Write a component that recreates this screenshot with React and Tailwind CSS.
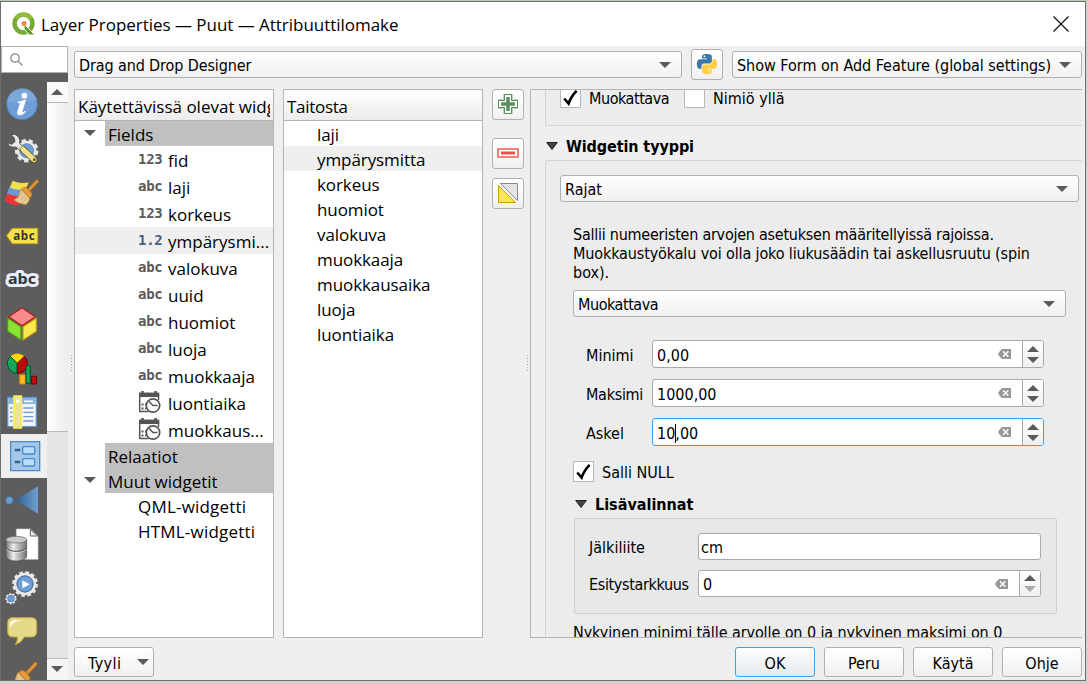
const button = "border border-[#b0b0b0] rounded-[3px] bg-gradient-to-b from-white to-[#f0f0f0]";
const input = "flex items-center border border-[#a9a9a9] rounded-[3px] bg-white";

function Arrow({ up = false, className = "text-[#5a5a5a]" }) {
  return (
    <svg className={"shrink-0 " + className} width="12" height="6" viewBox="0 0 12 6" fill="currentColor">
      <path d={up ? "M0 6 6 0l6 6z" : "M0 0h12L6 6z"} />
    </svg>
  );
}

function Combo({ label, className, textClass = "pt-[2px]" }) {
  return (
    <div className={`flex items-center justify-between pl-1 pr-[10px] ${button} ${className}`}>
      <span className={"whitespace-nowrap " + textClass}>{label}</span>
      <Arrow />
    </div>
  );
}

function Check({ checked = false }) {
  return (
    <span className="flex h-[21px] w-[21px] shrink-0 items-center justify-center border border-[#b9b9b9] bg-white">
      {checked && (
        <svg width="17" height="17" viewBox="0 0 17 17" fill="none" stroke="#000" strokeWidth="2.6">
          <path d="M2.2 9.5 6.6 14.6 Q9 7.5 14.6 1.8" />
        </svg>
      )}
    </span>
  );
}

function ClearIcon() {
  return (
    <svg width="13" height="10" viewBox="0 0 13 10">
      <path d="M4 0h9v10H4Q1.5 8 0 5 1.500 2 4 0z" fill="#979797" />
      <path d="m5 2.200 5.400 5.600M10.400 2.200 5 7.800" stroke="#fff" strokeWidth="1.400" />
    </svg>
  );
}

function Spin({ children, className, focused = false, atMin = false }) {
  return (
    <div className={`flex border rounded-[3px] bg-white ${focused ? "border-[#3fa0ee]" : "border-[#a9a9a9]"} ${className}`}>
      <div className="flex flex-1 items-center justify-between pl-1 pr-[11px]">
        <span className="flex items-center pt-[3px]">{children}</span>
        <ClearIcon />
      </div>
      <div className="flex w-[21px] flex-col items-center justify-center gap-[5px] rounded-r-[2px] border-l border-[#a9a9a9] bg-gradient-to-b from-white to-[#f0f0f0]">
        <Arrow up />
        <Arrow className={atMin ? "text-[#a9a9a9]" : "text-[#5a5a5a]"} />
      </div>
    </div>
  );
}

function Gear({ cx, cy, r, w, n, fill = "#e8e8e8", edge = "#777" }) {
  const c = Math.PI * 2 * r;
  const dash = `${(c / n) * 0.58} ${(c / n) * 0.42}`;
  return (
    <g fill="none">
      <circle cx={cx} cy={cy} r={r} stroke={edge} strokeWidth={w + 3} strokeDasharray={dash} />
      <circle cx={cx} cy={cy} r={r} stroke={fill} strokeWidth={w} strokeDasharray={dash} />
      <circle cx={cx} cy={cy} r={r - w / 2} stroke={fill} strokeWidth={w * 0.9} />
    </g>
  );
}

function Brush() {
  return (
    <g>
      <path d="M108 34 82 62" stroke="#a5671c" strokeWidth="11" strokeLinecap="round" />
      <path d="M108 34 82 62" stroke="#e0973a" strokeWidth="7" strokeLinecap="round" />
      <path d="m62 57 8-5q6-1 10 4l12 13q3 6-1 10l-6 6z" fill="#e39b3c" stroke="#a5671c" strokeWidth="2" />
      <path d="m60 57 26 28q-2 14-12 19-20-2-36-14l12-8q5-13 10-25z" fill="#eccb94" stroke="#b57a34" strokeWidth="2" />
      <path d="m50 87 14-19M58 92l13-16M66 97l12-14" stroke="#b98f55" strokeWidth="2" />
    </g>
  );
}

const sidebarIcons = [
  <g>
    <circle cx="63" cy="67" r="46" fill="#6f9ed6" stroke="#5080b8" strokeWidth="3" />
    <path d="M18 62a45 45 0 0 1 89-8q-40 2-89 8z" fill="#86aedd" opacity=".6" />
    <circle cx="70" cy="41" r="8.500" fill="#fff" />
    <path d="M49 59q14-1 23-6l3 1-11 36q-1 4 8-4l3 3q-12 12-21 11-8-2-5-12l7-22q1-4-7-4z" fill="#fff" />
  </g>,
  <g>
    <Gear cx={77} cy={74} r={30} w={10} n={9} />
    <circle cx="77" cy="74" r="21" fill="#6f9ed6" stroke="#5080b8" strokeWidth="2" />
    <path d="M30 26q15-4 23 8 5 9 3 18l10 11-10 10-11-10q-18 4-27-13l15 5 9-9q1-12-12-20z" fill="#e9e9e9" stroke="#484848" strokeWidth="2.500" />
    <path d="m67 71 32 30" stroke="#5f5726" strokeWidth="20" strokeLinecap="round" />
    <path d="m66 70 33 31" stroke="#efe18b" strokeWidth="15" strokeLinecap="round" />
    <path d="m55 69 12-10" stroke="#c8b75b" strokeWidth="4" />
    <circle cx="100" cy="101" r="4" fill="#514b28" />
  </g>,
  <g>
    <path d="M35 32q22 10 48 5l-14 32Q42 70 24 58z" fill="#f4e04d" />
    <path d="M25 52q20 10 45 7l-8 22Q36 82 17 71z" fill="#6a9bd8" />
    <path d="M18 70q18 10 38 8l-2 27Q30 107 12 92z" fill="#ee3338" />
    <Brush />
  </g>,
  <g>
    <path d="M17 65 34 43h76v46H34z" fill="#f7e04e" stroke="#c8a51a" strokeWidth="3" strokeLinejoin="round" />
    <text x="37" y="77" fontSize="35" fontWeight="bold" fill="#333" textLength="64" className="font-['Noto_Sans',sans-serif]">abc</text>
  </g>,
  <g>
    <text x="21" y="77" fontSize="45" fontWeight="bold" fill="#31363b" stroke="#e9eefc" strokeWidth="18" strokeLinejoin="round" paintOrder="stroke" textLength="84" lengthAdjust="spacingAndGlyphs" className="font-['Noto_Sans',sans-serif]">abc</text>
  </g>,
  <g strokeWidth="3.500" strokeLinejoin="round">
    <path d="M63 17 103 44 63 71 23 44z" fill="#f78b8b" stroke="#b5161b" />
    <path d="M20 48 60 74v40L20 88z" fill="#8ae234" stroke="#55961a" />
    <path d="M106 48 66 74v40l40-26z" fill="#fce94f" stroke="#c4a000" />
  </g>,
  <g strokeLinejoin="round">
    <path d="M49 52 28 31a30 30 0 0 1 42 0z" fill="#ffd800" stroke="#b38600" strokeWidth="2" />
    <path d="M49 52 28 31a30 30 0 0 0 21 51z" fill="#12a75a" stroke="#064d29" strokeWidth="3" />
    <path d="M49 52 70 31a30 30 0 0 1-21 51z" fill="#bd0b0b" stroke="#5f0505" strokeWidth="3" />
    <path d="M56 86h17v28H56z" fill="#fdbc23" stroke="#c98500" strokeWidth="3" />
    <path d="M91 91h16v23H91z" fill="#bd0b0b" stroke="#6e0505" strokeWidth="3" />
    <path d="M75 59h13v53H75z" fill="#12a75a" stroke="#064d29" strokeWidth="3" />
  </g>,
  <g>
    <path d="M20 22h86v88H20z" fill="#f2f4f6" stroke="#5e93cb" strokeWidth="4" />
    <path d="M22 24h82v18H22z" fill="#86b5e3" />
    <path d="M69 34h26" stroke="#fff" strokeWidth="5" />
    <path d="M27 54h8M67 54h30M27 67h8M67 67h30M27 80h8M67 80h30M27 93h8M67 93h30" stroke="#6e9dce" strokeWidth="4" />
    <path d="M39 18h22v96H39z" fill="#ede0a5" stroke="#f8ef4f" strokeWidth="5" />
    <path d="M45 29h10v10H45z" fill="#fff" />
  </g>,
  <g>
    <path d="M29 23h87v87H29z" fill="#a3c7ea" stroke="#4c8ac8" strokeWidth="4" />
    <g fill="#b8dcfb" stroke="#4c8ac8" strokeWidth="4">
      <rect x="65" y="38" width="36" height="22" rx="3" />
      <rect x="65" y="74" width="36" height="22" rx="3" />
    </g>
    <path d="M41 48h17M41 84h17" stroke="#35648f" strokeWidth="8" />
  </g>,
  <g>
    <defs>
      <linearGradient id="cone"><stop stopColor="#2f6095" /><stop offset="1" stopColor="#6f9fd0" /></linearGradient>
    </defs>
    <circle cx="25" cy="67" r="11" fill="#6b9ccf" stroke="#4379ad" strokeWidth="2" />
    <path d="M44 66 111 25v82z" fill="url(#cone)" />
  </g>,
  <g>
    <defs>
      <linearGradient id="metal"><stop stopColor="#777" /><stop offset=".35" stopColor="#ececec" /><stop offset="1" stopColor="#707070" /></linearGradient>
    </defs>
    <path d="M46 21h42l23 21v70H46z" fill="#fff" stroke="#c8c8c8" strokeWidth="2" />
    <path d="M88 22v20h22z" fill="#e9e9e9" stroke="#666" strokeWidth="3" />
    <path d="M15 53v52q8 12 31 12t31-12V53z" fill="url(#metal)" stroke="#505050" strokeWidth="2" />
    <ellipse cx="46" cy="53" rx="31" ry="10" fill="#c9c9c9" stroke="#666" strokeWidth="2" />
    <path d="M15 80q8 11 31 11t31-11" fill="none" stroke="#eee" strokeWidth="2" />
    <path d="M15 77q8 11 31 11t31-11" fill="none" stroke="#505050" strokeWidth="3" />
  </g>,
  <g>
    <Gear cx={72} cy={54} r={34} w={9} n={12} />
    <circle cx="72" cy="54" r="24" fill="#6f9ed6" stroke="#4778af" strokeWidth="3" />
    <path d="m64 43 22 12-22 12z" fill="#fff" />
    <Gear cx={30} cy={98} r={14} w={5} n={9} />
    <circle cx="30" cy="98" r="10" fill="#6f9ed6" stroke="#4778af" strokeWidth="2" />
  </g>,
  <g>
    <path d="M36 23h54q17 0 17 15v27q0 16-17 16H70Q62 98 43 104q8-11 6-23H36q-16 0-16-16V38q0-15 16-15z" fill="#e5da87" stroke="#c1a940" strokeWidth="3" />
    <path d="M27 55V41q1-10 17-11h22q-32 2-39 25z" fill="#fffbe8" />
  </g>,
  <g transform="translate(-15 -8) scale(1.1)"><Brush /></g>,
];

function Sidebar() {
  return (
    <aside className="flex w-[67px] shrink-0 flex-col bg-[#5d5d5d]">
      <div className="h-[27px] shrink-0 border border-[#b0b0b0] bg-white pl-[8px] pt-[6px]">
        <svg width="13" height="13" viewBox="0 0 13 13" fill="none" stroke="#8a8a8a" strokeWidth="1.300">
          <circle cx="5" cy="5" r="4.200" /><path d="m8 8 4.500 4.500" />
        </svg>
      </div>
      <div className="flex min-h-0 flex-1">
        <div className="w-[46px] overflow-hidden pt-[9px]">
          {sidebarIcons.map((icon, i) => (
            <div key={i} className={i === 8 ? "h-[44px] bg-[#efefef]" : "h-[44px]"}>
              <svg width="46" height="44" viewBox="0 0 138 132">{icon}</svg>
            </div>
          ))}
        </div>
        <div className="mt-[9px] flex w-[21px] flex-col bg-[#e6e6e6]">
          <div className="flex h-[21px] items-center justify-center border-b border-[#b8b8b8] bg-[#f9f9f9] pb-[1px] pr-[1px]"><Arrow up /></div>
          <div className="h-[329px] border-b border-[#b8b8b8] bg-gradient-to-r from-white to-[#ececec]" />
          <div className="flex-1" />
          <div className="flex h-[22px] items-center justify-center border-t border-[#b8b8b8] bg-[#f5f5f5] pb-[2px] pr-[1px]"><Arrow /></div>
        </div>
      </div>
    </aside>
  );
}

function DateIcon() {
  return (
    <svg width="23" height="23" viewBox="0 0 23 23" fill="none" stroke="#555" strokeWidth="1.500">
      <path d="M1.700 3v17.500h9M20.500 3v6" />
      <path d="M1 3.800h20.200" strokeWidth="4.500" />
      <path d="M4.500 0v3M17.500 0v3" strokeWidth="2.500" />
      <circle cx="15" cy="14.500" r="6.700" fill="#fff" strokeWidth="1.700" />
      <path d="m11 10.500 4 4h4.500" />
      <path d="M3.500 13.500h2M3.500 17.500h2M7 17.500h1.500M7 13.500h1" strokeWidth="2" />
    </svg>
  );
}

const fields = [
  ["123", "fid"], ["abc", "laji"], ["123", "korkeus"], ["1.2", "ympärysmi..."], ["abc", "valokuva"],
  ["abc", "uuid"], ["abc", "huomiot"], ["abc", "luoja"], ["abc", "muokkaaja"], ["date", "luontiaika"], ["date", "muokkaus..."],
];

function GroupRow({ label, arrow = true }) {
  return (
    <div className="flex h-[25px]">
      <div className="flex w-[30px] items-center pb-[1px] pl-[9px]">{arrow && <Arrow />}</div>
      <div className="flex flex-1 items-center bg-[#c0c0c0] pl-[3px] pt-[3px]">{label}</div>
    </div>
  );
}

const panel = "flex flex-col border border-[#b4b4b4] bg-white font-['Open_Sans',sans-serif] text-[17px] leading-[24px]";
const header = "flex h-[31px] shrink-0 items-center overflow-hidden whitespace-nowrap border-b border-[#b4b4b4] bg-gradient-to-b from-white to-[#ececec] pl-[3px] pt-[3px]";

function FieldTree() {
  return (
    <div className={`w-[200px] ${panel}`}>
      <div className={header}><span className="w-[192px] overflow-hidden">Käytettävissä olevat widgetit</span></div>
      <GroupRow label="Fields" />
      {fields.map(([type, name], i) => (
        <div key={name} className={`flex h-[27px] items-center pl-[63px] ${i === 3 ? "bg-[#efefef]" : ""}`}>
          <div className="flex w-[30px] items-center">
            {type === "date" ? <DateIcon /> : (
              <span className={`pb-[2px] font-['DejaVu_Sans_Mono',monospace] text-[14px] font-bold leading-none tracking-[-0.300px] ${type === "1.2" ? "text-[#42607e]" : "text-[#5a5a5a]"}`}>{type}</span>
            )}
          </div>
          <span className="whitespace-nowrap pt-[2px]">{name}</span>
        </div>
      ))}
      <GroupRow label="Relaatiot" arrow={false} />
      <GroupRow label="Muut widgetit" />
      {["QML-widgetti", "HTML-widgetti"].map((t) => <div key={t} className="flex h-[25px] items-center pl-[63px] pt-[3px] tracking-[0.200px]">{t}</div>)}
    </div>
  );
}

const layoutItems = ["laji", "ympärysmitta", "korkeus", "huomiot", "valokuva", "muokkaaja", "muokkausaika", "luoja", "luontiaika"];

function LayoutTree() {
  return (
    <div className={`ml-[9px] w-[200px] ${panel}`}>
      <div className={header}><span className="tracking-[-0.300px]">Taitosta</span></div>
      {layoutItems.map((t, i) => <div key={t} className={`flex h-[25px] items-center pl-[33px] pt-[3px] tracking-[-0.080px] ${i === 1 ? "bg-[#efefef]" : ""}`}>{t}</div>)}
    </div>
  );
}

function ToolButton({ children, className = "" }) {
  return <div className={`flex h-[31px] w-[32px] shrink-0 items-center justify-center pb-[1px] ${button} ${className}`}>{children}</div>;
}

function Tools() {
  return (
    <div className="ml-[9px] w-[32px]">
      <ToolButton>
        <svg width="22" height="22" viewBox="0 0 22 22" fill="#fff" stroke="#5a8f5d">
          <path d="M6.500 1h9v5.500H21v9h-5.500V21h-9v-5.500H1v-9h5.500z" fill="#8ab28b" stroke="none" />
          <path d="M7.500 1.500h7v6h6v7h-6v6h-7v-6h-6v-7h6z" />
          <path d="M11 4v14M4 11h14" strokeWidth="3.500" />
        </svg>
      </ToolButton>
      <ToolButton className="mt-[18px]">
        <svg width="22" height="10" viewBox="0 0 22 10">
          <path d="M1 1h20v8H1z" fill="#fff" stroke="#ee5a5a" strokeWidth="1.500" /><path d="M4 5h14" stroke="#ef4b4b" strokeWidth="3" />
        </svg>
      </ToolButton>
      <ToolButton className="mt-[9px]">
        <svg width="20" height="20" viewBox="0 0 20 20">
          <path d="M2.500.5h17v17z" fill="#e4e4e6" stroke="#88888c" /><path d="M.5 2.500v17h17z" fill="#fde74e" stroke="#c4a000" />
        </svg>
      </ToolButton>
    </div>
  );
}

function SectionTitle({ children, className }) {
  return (
    <div className={`flex items-center gap-[8px] font-bold ${className}`}>
      <svg width="12" height="8" viewBox="0 0 12 8"><path d="M.7.500h10.600L6 7.500z" fill="#444" stroke="#222" /></svg>
      <span className="pt-[1px]">{children}</span>
    </div>
  );
}

function Properties() {
  return (
    <div className="ml-[6px] flex w-[552px] flex-col overflow-hidden border-y border-l border-[#b4b4b4] pl-[14px]">
      <div className="flex h-[36px] shrink-0 rounded-bl-[2px] border-b border-l border-[#d4d4d4] bg-[#ececec] pl-[14px]">
        <div className="-mt-[3px] flex h-[21px] items-center">
          <Check checked /><span className="ml-[8px] w-[95px] pt-[2px] tracking-[-0.450px]">Muokattava</span>
          <Check /><span className="ml-[8px] pt-[2px]">Nimiö yllä</span>
        </div>
      </div>
      <SectionTitle className="h-[34px] shrink-0 pt-[6px] pl-[1px] tracking-[-0.100px]">Widgetin tyyppi</SectionTitle>
      <div className="flex h-[520px] shrink-0 flex-col rounded-tl-[2px] border-l border-t border-[#d4d4d4] bg-[#ececec] pl-[14px] pt-[14px]">
        <Combo label="Rajat" className="h-[27px] w-[519px] shrink-0" />
        <div className="ml-[13px] flex w-[493px] flex-col">
          <p className="mt-[23px] whitespace-nowrap leading-[19px]">
            <span className="block tracking-[-0.250px]">Sallii numeeristen arvojen asetuksen määritellyissä rajoissa.</span>
            <span className="block tracking-[-0.130px]">Muokkaustyökalu voi olla joko liukusäädin tai askellusruutu (spin</span>
            <span className="block">box).</span>
          </p>
          <Combo label="Muokattava" className="mt-[8px] h-[27px] shrink-0" textClass="tracking-[-0.450px] pt-[2px]" />
          <div className="mt-[23px] flex flex-col gap-[11px] pl-[13px]">
            <div className="flex items-center"><span className="w-[66px] pt-[3px]">Minimi</span><Spin className="h-[28px] w-[392px]">0,00</Spin></div>
            <div className="flex items-center"><span className="w-[66px] pt-[3px] tracking-[-0.300px]">Maksimi</span><Spin className="h-[28px] w-[392px]">1000,00</Spin></div>
            <div className="flex items-center"><span className="w-[66px] pt-[3px]">Askel</span><Spin focused className="h-[28px] w-[392px]">10<i className="-mr-[1px] h-[19px] w-[1px] bg-black" />,00</Spin></div>
          </div>
          <div className="mt-[15px] flex h-[21px] items-center gap-[8px]"><Check checked /><span className="pt-[2px]">Salli NULL</span></div>
          <SectionTitle className="mt-[12px] h-[20px] pl-[2px]">Lisävalinnat</SectionTitle>
          <div className="ml-[1px] mt-[4px] flex h-[96px] w-[483px] flex-col gap-[10px] rounded-[2px] border border-[#d0d0d0] bg-[#e8e8e8] pl-[14px] pt-[14px]">
            <div className="flex items-center"><span className="w-[109px] pt-[2px]">Jälkiliite</span><div className={`h-[27px] w-[343px] pl-[2px] pt-[2px] ${input}`}>cm</div></div>
            <div className="flex items-center"><span className="w-[109px] pt-[2px] tracking-[-0.350px]">Esitystarkkuus</span><Spin atMin className="h-[27px] w-[343px]">0</Spin></div>
          </div>
          <div className="mt-[9px] whitespace-nowrap tracking-[-0.090px]">Nykyinen minimi tälle arvolle on 0 ja nykyinen maksimi on 0</div>
        </div>
      </div>
    </div>
  );
}

function PythonLogo() {
  return (
    <svg width="22" height="22" viewBox="0 0 24 24">
      <path d="M11.900 1C6.300 1 6.700 3.400 6.700 3.400v2.500h5.300v.8H4.500S1 6.300 1 11.900s3.100 5.300 3.100 5.300h1.900v-2.600s-.1-3.100 3.100-3.100h5.200s3 .05 3-2.900V3.900S17.800 1 11.900 1zM9 2.700a1 1 0 1 1 0 1.900 1 1 0 0 1 0-1.900z" fill="#3c77a9" />
      <path d="M12.100 23c5.600 0 5.200-2.400 5.200-2.400v-2.500H12v-.8h7.500s3.500.4 3.500-5.200-3.100-5.300-3.100-5.300H18v2.600s.1 3.100-3.100 3.100H9.700s-3-.05-3 2.900v4.800S6.200 23 12.100 23zm2.900-1.700a1 1 0 1 1 0-1.900 1 1 0 0 1 0 1.900z" fill="#fdcf3f" />
    </svg>
  );
}

function TitleBar() {
  return (
    <div className="flex h-[44px] shrink-0 items-center bg-white pl-[11px] pr-[16px]">
      <svg width="24" height="24" viewBox="0 0 24 24" fill="none">
        <circle cx="11.500" cy="11.500" r="8.900" stroke="#76aa34" strokeWidth="4.500" />
        <path d="M4 6.500a9 9 0 0 1 15 0" stroke="#93bb3c" strokeWidth="3.500" />
        <path d="m12 12 11 11h-5.500L12 17z" fill="#5d9c2c" stroke="#fff" strokeWidth="1" />
        <circle cx="12" cy="11.500" r="2.500" fill="#f08a35" />
      </svg>
      <h1 className="ml-[5px] flex-1 pt-[2px] font-['Open_Sans',sans-serif] text-[17px] tracking-[-0.030px]">Layer Properties — Puut — Attribuuttilomake</h1>
      <svg width="16" height="16" viewBox="0 0 16 16" stroke="#111" strokeWidth="1.200"><path d="m.5.500 15 15M15.500.5l-15 15" /></svg>
    </div>
  );
}

const dots = "h-[17px] w-[1px] bg-[repeating-linear-gradient(to_bottom,#a8a8a8_0_1px,transparent_1px_3px)]";

export default function App() {
  return (
    <div className="flex h-[684px] w-[1088px] flex-col overflow-hidden bg-[#d2d1cb] font-['DejaVu_Sans_Condensed','DejaVu_Sans',sans-serif] text-[16px] leading-[20px] text-black">
      <div className="h-[1px] shrink-0 bg-[#b9cdb4]" />
      <div className="flex h-[680px] w-[1086px] shrink-0 flex-col border border-[#6e6e6e] bg-[#efefef]">
        <TitleBar />
        <div className="flex min-h-0 flex-1">
          <Sidebar />
          <main className="flex flex-1 flex-col">
            <div className="mt-[3px] flex h-[31px] items-center pl-[6px]">
              <Combo label="Drag and Drop Designer" className="h-[27px] w-[608px]" textClass="pt-[2px] tracking-[-0.120px]" />
              <ToolButton className="ml-[9px]"><PythonLogo /></ToolButton>
              <Combo label="Show Form on Add Feature (global settings)" className="ml-[9px] h-[27px] w-[350px]" textClass="pt-[2px] tracking-[-0.020px]" />
            </div>
            <div className="mt-[9px] flex h-[549px]">
              <div className="flex w-[6px] items-center"><div className={`ml-[3px] ${dots}`} /></div>
              <FieldTree />
              <LayoutTree />
              <Tools />
              <div className="-mr-[4px] ml-[3px] flex w-[1px] items-center"><div className={dots} /></div>
              <Properties />
            </div>
            <div className="mt-[9px] flex h-[30px] gap-[9px] pl-[6px]">
              <div className={`flex w-[80px] items-center justify-between pl-[13px] pr-[4px] ${button}`}><span className="pt-[3px] tracking-[0.400px]">Tyyli</span><Arrow /></div>
              <div className="w-[563px]" />
              <div className="flex w-[80px] items-center justify-center rounded-[3px] border border-[#3fa0ee] bg-gradient-to-b from-white to-[#e4eaf0] pt-[3px]">OK</div>
              {["Peru", "Käytä", "Ohje"].map((t) => <div key={t} className={`flex w-[80px] items-center justify-center pt-[3px] ${button}`}>{t}</div>)}
            </div>
          </main>
        </div>
      </div>
    </div>
  );
}
